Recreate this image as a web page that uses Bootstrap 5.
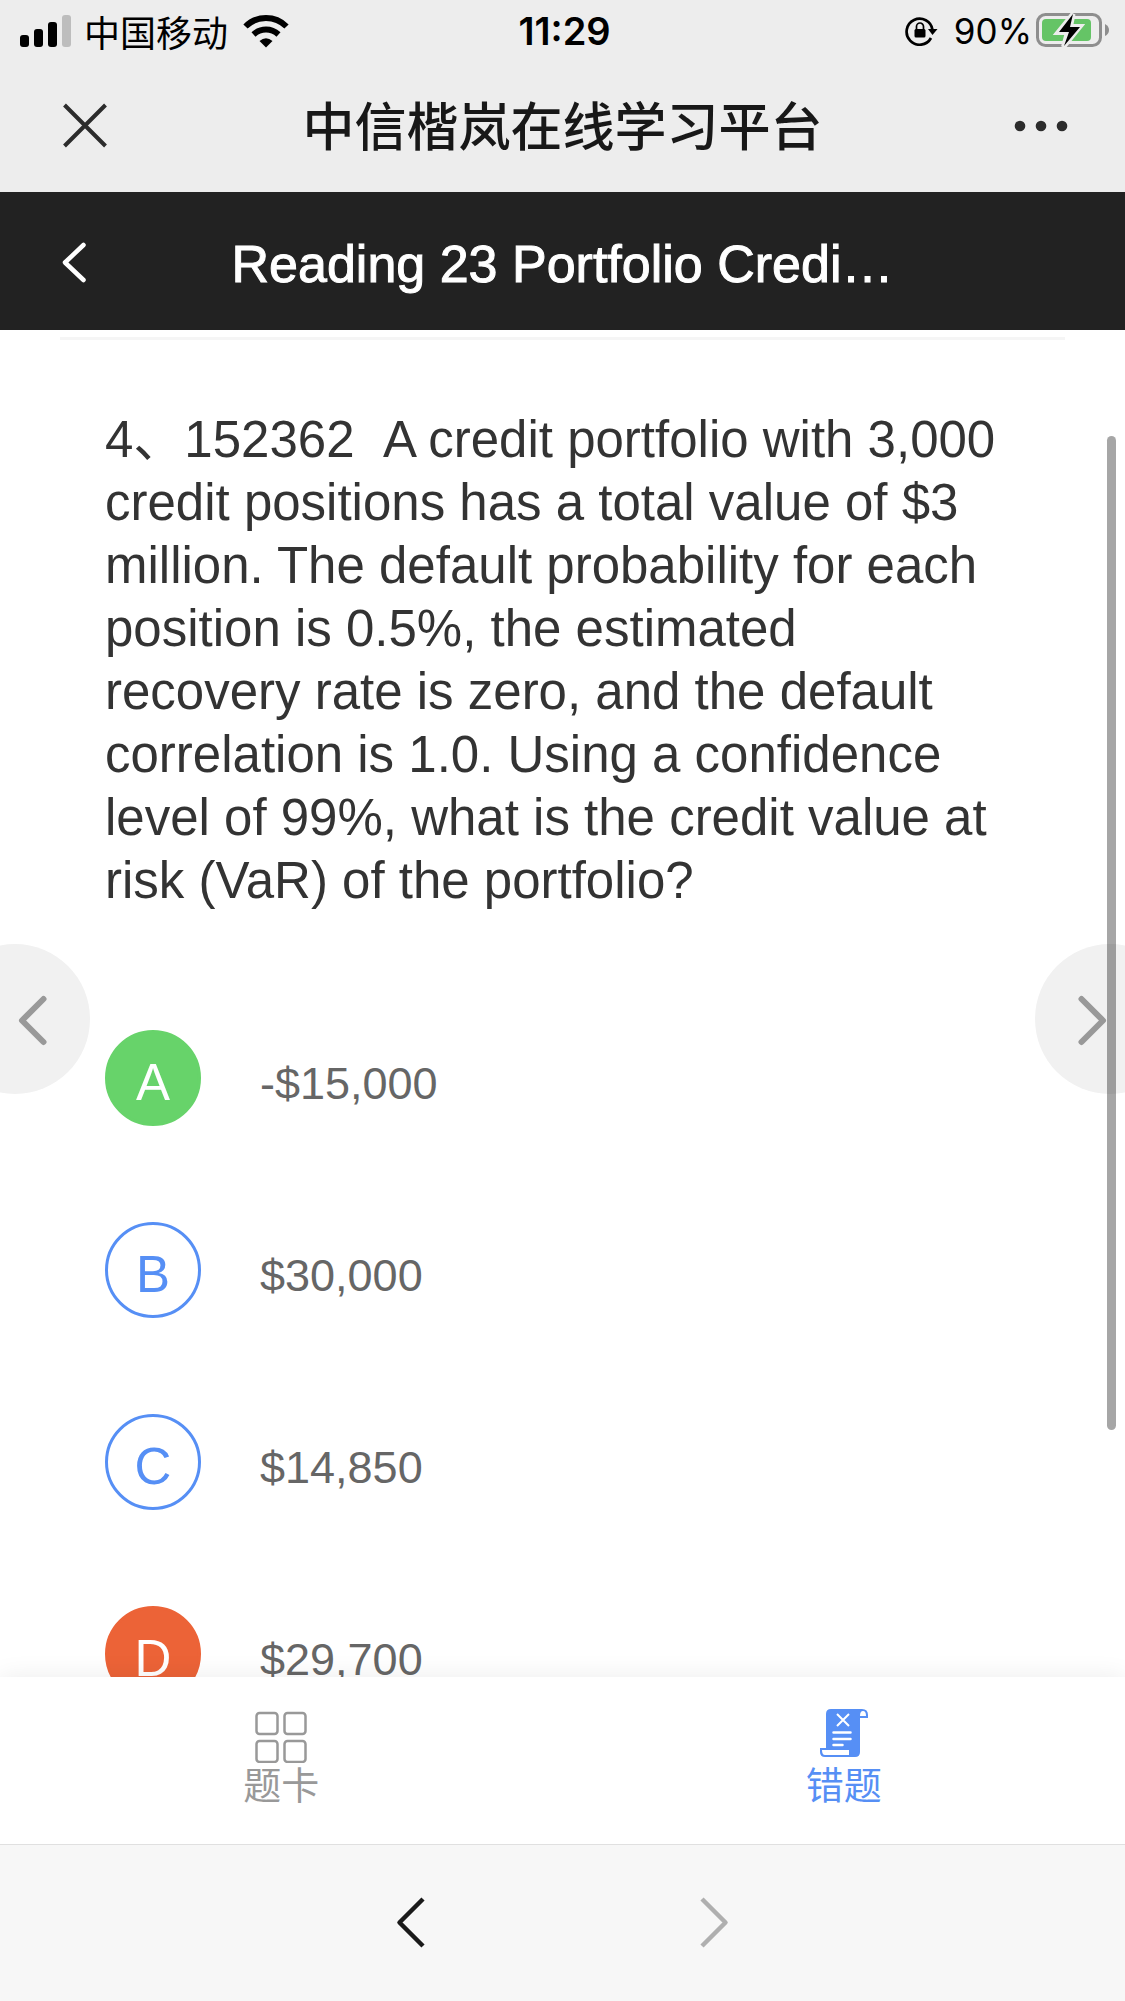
<!DOCTYPE html>
<html lang="zh-CN">
<head>
<meta charset="utf-8">
<meta name="viewport" content="width=device-width, initial-scale=1">
<title>中信楷岚在线学习平台</title>
<link href="https://cdn.jsdelivr.net/npm/bootstrap@5.3.0/dist/css/bootstrap.min.css" rel="stylesheet">
<style>
  body { font-family: "Liberation Sans", "Noto Sans CJK SC", sans-serif; color: #333; background: #fff; }
  svg { display: block; flex: none; }
  .plain { background: none; border: 0; padding: 0; color: inherit; text-decoration: none; }
  .topbar { background: #ededed; }
  .statusbar { height: 60px; padding: 2px 16px 0 20px; font: 35px/58px Inter, "Noto Sans CJK SC", sans-serif; color: #000; }
  .carrier { font: 400 36px/58px "Noto Sans CJK SC", sans-serif; margin: 0 15px 0 13px; }
  .clock { font-size: 38px; font-weight: 600; }
  .side { flex: 1 1 0; }
  .appbar { height: 132px; padding: 0 56px; color: #2c2c2c; }
  .apptitle { font: 500 52px/64px "Noto Sans CJK SC", sans-serif; color: #181818; margin: 0; padding-bottom: 5px; }
  .lesson { height: 138px; padding: 0 56px; background: #222; color: #fff; }
  .lesson-title { font-size: 52px; line-height: 64px; font-weight: 400; margin: 0; padding-top: 6px; -webkit-text-stroke: 1px #fff; }
  .icon-slot { width: 56px; }
  .stage { flex: 1 1 0; min-height: 0; }
  .sheet { padding: 7px 60px 0; }
  .rule { height: 3px; background: #f5f5f5; }
  .quiz { padding: 68px 45px 0; }
  .question { font-size: 51px; line-height: 63px; margin: 0 0 118px; }
  .choices { gap: 96px; }
  .choice { gap: 59px; height: 96px; text-align: left; color: #666; font-size: 45px; line-height: 54px; }
  .choice-value { padding-top: 12px; }
  .letter { width: 96px; height: 96px; border: 3px solid #568ff5; color: #568ff5; font-size: 51px; line-height: 60px; padding-top: 9px; flex: none; }
  .letter-right { background: #67d36a; border-color: #67d36a; color: #fff; }
  .letter-wrong { background: #ec6337; border-color: #ec6337; color: #fff; }
  .pager { top: 614px; width: 150px; height: 150px; background: #f1f1f1; color: #999; }
  .pager-prev { left: -60px; }
  .pager-next { right: -60px; }
  .thumb { top: 106px; right: 9px; width: 9px; height: 994px; background: rgba(0,0,0,.35); border-radius: 5px; z-index: 2; }
  .tabs { height: 167px; padding-top: 32px; background: #fff; box-shadow: 0 0 24px rgba(0,0,0,.08); z-index: 3; }
  .tab { font: 38px/40px "Noto Sans CJK SC", sans-serif; color: #999; }
  .tab-on { color: #568ff5; }
  .browser { height: 157px; background: #f7f7f7; border-top: 1px solid #e0e0e0; z-index: 4; gap: 248px; }
</style>
<script src="https://cdn.jsdelivr.net/npm/bootstrap@5.3.0/dist/js/bootstrap.bundle.min.js"></script>
</head>
<body>
<div class="d-flex flex-column vh-100 overflow-hidden">
  <header class="topbar flex-shrink-0">
    <div class="statusbar d-flex align-items-center">
      <div class="side d-flex align-items-center">
        <svg width="51" height="32" viewBox="0 0 51 32" aria-hidden="true"><rect y="20" width="9" height="12" rx="3"/><rect x="14" y="14" width="9" height="18" rx="3"/><rect x="28" y="7" width="9" height="25" rx="3"/><rect x="42" width="9" height="32" rx="3" fill="#bdbdbd"/></svg>
        <span class="carrier">中国移动</span>
        <svg width="46" height="34" viewBox="0 0 46 34" aria-hidden="true"><g fill="none" stroke="#000" stroke-width="6"><path d="M2.500 12.500Q11 4 23 4T43.500 12.500"/><path d="M10.500 20.500Q16 15.500 23 15.500T35.500 20.500"/></g><path d="M16.500 27Q23 21.500 29.500 27L23 33.500Z"/></svg>
      </div>
      <span class="clock">11:29</span>
      <div class="side d-flex align-items-center justify-content-end">
        <svg width="33" height="30" viewBox="0 0 33 30" aria-hidden="true"><path d="M26 22A13 13 0 1 1 27.500 14" fill="none" stroke="#000" stroke-width="2.700"/><path d="M23 13h9.500l-5 6z"/><rect x="9.500" y="13" width="11" height="8.500" rx="1.500"/><path d="M11.500 14v-3.500a3.500 3.500 0 0 1 7 0V14" fill="none" stroke="#000" stroke-width="1.700"/></svg>
        <span class="ms-3">90%</span>
        <svg class="ms-1" width="73" height="36" viewBox="0 0 73 36" aria-hidden="true"><rect x="1.500" y="1.500" width="63" height="31" rx="8" fill="none" stroke="#8e8e8e" stroke-width="3"/><rect x="6" y="6" width="49" height="22" rx="4" fill="#65c466"/><path d="M69 11q4 2 4 6t-4 6z" fill="#8e8e8e"/><path d="M37 1L22 19.500h9.500L27.500 34 44 13.500h-9.500z" stroke="#ededed" stroke-width="5"/><path d="M37 1L23 19h10L28 33 44 14H34z"/></svg>
      </div>
    </div>
    <div class="appbar d-flex align-items-center justify-content-between">
      <button class="plain" type="button" aria-label="关闭"><svg width="56" height="56" viewBox="0 0 56 56"><path d="M8.500 7l41 41M49.500 7l-41 41" stroke="currentColor" stroke-width="4"/></svg></button>
      <h1 class="apptitle">中信楷岚在线学习平台</h1>
      <button class="plain" type="button" aria-label="更多"><svg width="56" height="56" viewBox="0 0 56 56" fill="currentColor"><circle cx="7" cy="28" r="5.300"/><circle cx="28" cy="28" r="5.300"/><circle cx="49" cy="28" r="5.300"/></svg></button>
    </div>
  </header>
  <nav class="lesson flex-shrink-0 d-flex align-items-center justify-content-between">
    <button class="plain" type="button" aria-label="返回"><svg width="56" height="56" viewBox="0 0 56 56"><path d="M27.500 12L9 29.500l18.500 17.500" fill="none" stroke="currentColor" stroke-width="4.500" stroke-linecap="round" stroke-linejoin="round"/></svg></button>
    <h2 class="lesson-title text-nowrap">Reading 23 Portfolio Credi…</h2>
    <span class="icon-slot"></span>
  </nav>
  <main class="stage position-relative overflow-hidden">
    <div class="sheet">
      <div class="rule"></div>
      <div class="quiz">
        <p class="question">4、152362&nbsp; A credit portfolio with 3,000 credit positions has a total value of $3 million. The default probability for each position is 0.5%, the estimated <br>recovery rate is zero, and the default correlation is 1.0. Using a confidence level of 99%, what is the credit value at risk (VaR) of the portfolio?</p>
        <div class="choices d-flex flex-column">
          <button type="button" class="plain choice d-flex align-items-center"><span class="letter letter-right rounded-circle d-flex align-items-center justify-content-center">A</span><span class="choice-value">-$15,000</span></button>
          <button type="button" class="plain choice d-flex align-items-center"><span class="letter rounded-circle d-flex align-items-center justify-content-center">B</span><span class="choice-value">$30,000</span></button>
          <button type="button" class="plain choice d-flex align-items-center"><span class="letter rounded-circle d-flex align-items-center justify-content-center">C</span><span class="choice-value">$14,850</span></button>
          <button type="button" class="plain choice d-flex align-items-center"><span class="letter letter-wrong rounded-circle d-flex align-items-center justify-content-center">D</span><span class="choice-value">$29,700</span></button>
        </div>
      </div>
    </div>
    <button type="button" class="plain pager pager-prev position-absolute rounded-circle" aria-label="上一题"><svg width="150" height="150" viewBox="0 0 150 150"><path d="M103.500 55L82 76.500l21.500 21.500" fill="none" stroke="currentColor" stroke-width="6" stroke-linecap="round" stroke-linejoin="round"/></svg></button>
    <button type="button" class="plain pager pager-next position-absolute rounded-circle" aria-label="下一题"><svg width="150" height="150" viewBox="0 0 150 150"><path d="M46.500 55L68 76.500l-21.500 21.500" fill="none" stroke="currentColor" stroke-width="6" stroke-linecap="round" stroke-linejoin="round"/></svg></button>
    <div class="thumb position-absolute"></div>
  </main>
  <nav class="tabs flex-shrink-0 position-relative d-flex align-items-start">
    <a href="#" class="plain tab flex-fill w-50 d-flex flex-column align-items-center">
      <svg width="52" height="54" viewBox="0 0 52 54" fill="none" stroke="currentColor" stroke-width="2.500"><rect x="1.500" y="4" width="21" height="21" rx="3"/><rect x="29.500" y="4" width="21" height="21" rx="3"/><rect x="1.500" y="32" width="21" height="21" rx="3"/><rect x="29.500" y="32" width="21" height="21" rx="3"/></svg>
      <span>题卡</span>
    </a>
    <a href="#" class="plain tab tab-on flex-fill w-50 d-flex flex-column align-items-center">
      <svg width="48" height="54" viewBox="0 0 48 54"><path d="M11 0h31q6 0 6 6v3h-8v34q0 5-5 5H5q-5 0-5-5v-4h6V5q0-5 5-5z" fill="currentColor"/><path d="M40 7q0-5 3-5t3 5zM2 41h27v5H5q-3 0-3-5z" fill="#fff"/><path d="M17 5l12 12M29 5L17 17" stroke="#fff" stroke-width="2"/><path d="M13.500 23.500h17M13.500 30h17M13.500 36h9" stroke="#fff" stroke-width="2.500" stroke-linecap="round"/></svg>
      <span>错题</span>
    </a>
  </nav>
  <footer class="browser flex-shrink-0 position-relative d-flex align-items-center justify-content-center">
    <button class="plain" type="button" aria-label="后退"><svg width="56" height="56" viewBox="0 0 56 56"><path d="M40 4L16.500 27.500 40 51" fill="none" stroke="#1a1a1a" stroke-width="4.500" stroke-linejoin="round"/></svg></button>
    <button class="plain" type="button" aria-label="前进" disabled><svg width="56" height="56" viewBox="0 0 56 56"><path d="M15 4l23.500 23.500L15 51" fill="none" stroke="#afafaf" stroke-width="4.500" stroke-linejoin="round"/></svg></button>
  </footer>
</div>
</body>
</html>
